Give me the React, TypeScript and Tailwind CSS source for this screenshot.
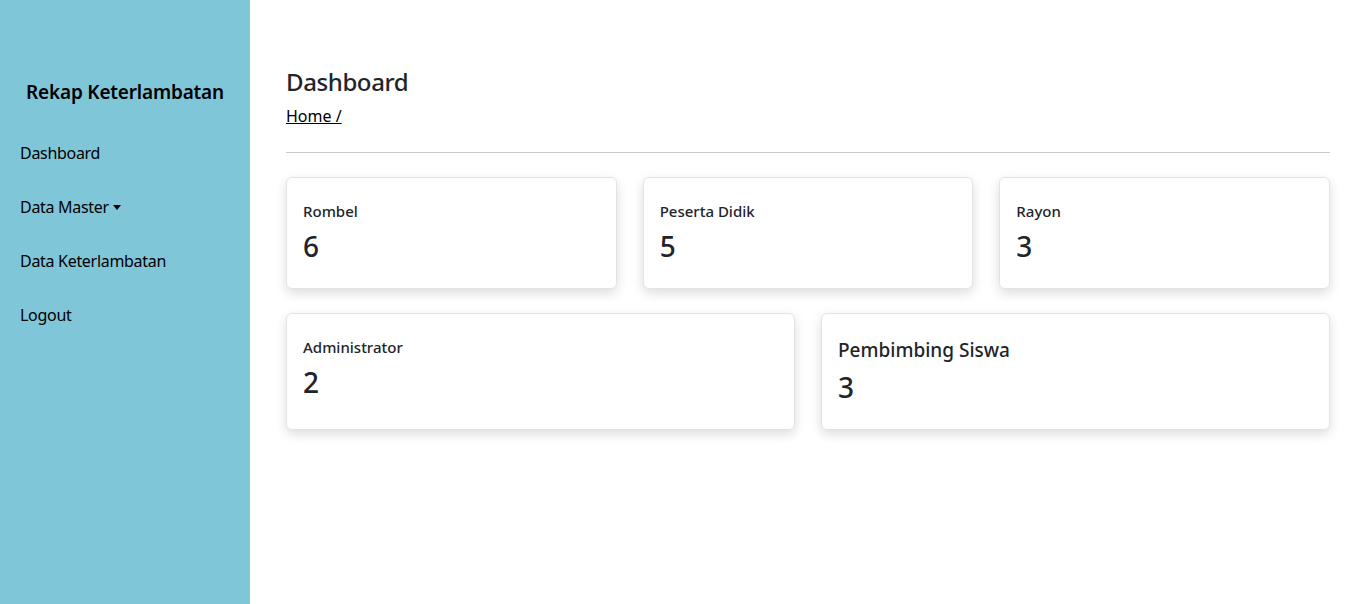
const stats = [
  { label: "Rombel", value: 6 },
  { label: "Peserta Didik", value: 5 },
  { label: "Rayon", value: 3 },
];

const menu = ["Dashboard", "Data Master", "Data Keterlambatan", "Logout"];

const App = () => {
  return (
    <div className="flex min-h-screen font-['Noto_Sans',sans-serif] text-[#212529]">
      <aside className="w-[250px] shrink-0 bg-[#80c6d9] text-black">
        <h1 className="pt-[78px] text-center text-[19px] font-semibold leading-7 tracking-[-0.2px]">
          Rekap Keterlambatan
        </h1>
        <ul className="mt-[35px] flex flex-col gap-[30px] px-5">
          {menu.map((item) => (
            <li key={item} className="text-base leading-6 tracking-[-0.3px]">
              <a href="#" className="flex items-center">
                {item}
                {item === "Data Master" && (
                  <span className="ml-[4px] mt-[1px] border-x-[4px] border-t-[5px] border-x-transparent border-t-black" />
                )}
              </a>
            </li>
          ))}
        </ul>
      </aside>

      <main className="flex-1 px-9 pt-[68px]">
        <h2 className="mb-[7px] text-2xl font-medium leading-[1.2] tracking-[-0.4px]">Dashboard</h2>
        <a href="#" className="text-base leading-6 text-black underline">
          Home /
        </a>
        <hr className="mt-6 mb-6 border-t border-[#c9c9c9]" />

        <div className="grid grid-cols-3 gap-[26px]">
          {stats.map((s) => (
            <div
              key={s.label}
              className="rounded-md border border-[#e3e3e3] bg-white px-4 pt-6 pb-[25px] shadow-[0_4px_12px_rgba(0,0,0,0.14)]"
            >
              <p className="mb-2 text-[15px] font-medium leading-[19px]">{s.label}</p>
              <p className="text-[28px] font-medium leading-[34px]">{s.value}</p>
            </div>
          ))}
        </div>

        <div className="mt-6 grid grid-cols-2 gap-[26px]">
          <div className="rounded-md border border-[#e3e3e3] bg-white px-4 pt-6 pb-[25px] shadow-[0_4px_12px_rgba(0,0,0,0.14)]">
            <p className="mb-2 text-[15px] font-medium leading-[19px]">Administrator</p>
            <p className="text-[28px] font-medium leading-[34px]">2</p>
          </div>
          <div className="rounded-md border border-[#e3e3e3] bg-white px-4 pt-6 pb-[25px] shadow-[0_4px_12px_rgba(0,0,0,0.14)]">
            <p className="mb-2 text-[19px] font-medium leading-6">Pembimbing Siswa</p>
            <p className="text-[28px] font-medium leading-[34px]">3</p>
          </div>
        </div>
      </main>
    </div>
  );
};

export default App;
